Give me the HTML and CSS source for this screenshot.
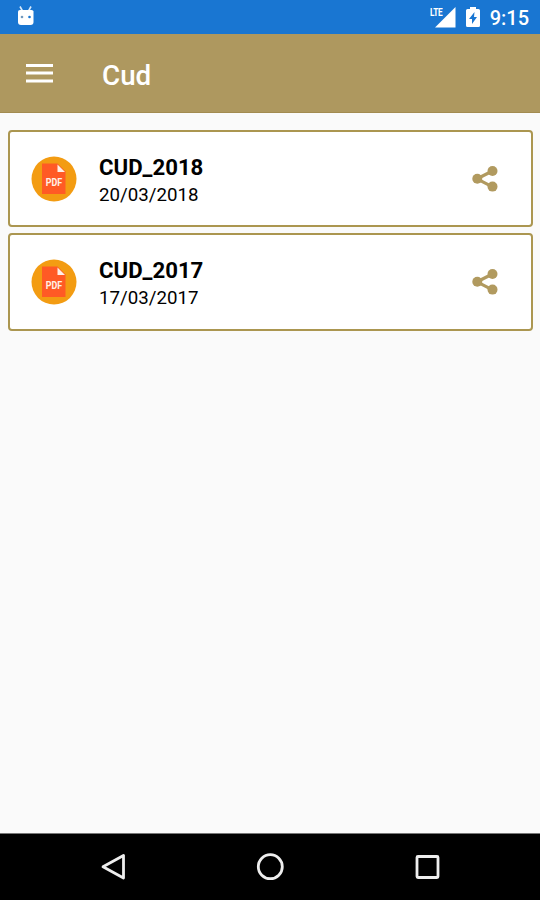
FILE: index.html
```
<!DOCTYPE html>
<html lang="en">
<head>
<meta charset="utf-8">
<title>Cud</title>
<link rel="stylesheet" href="styles.css">
</head>
<body>
<div class="statusbar">
  <svg class="robot" width="18" height="22" viewBox="0 0 18 22"><path d="M3 .5 5.500 5M14 .5 11.500 5" stroke="#d9eafb" stroke-width="1.600"/><path d="M1 5.500Q1 4 3 4h11.500Q16.500 4 16.500 5.500V16q0 3-3 3H4q-3 0-3-3z" fill="#fff"/><circle cx="5" cy="11" r="1.300" fill="#7199bd"/><circle cx="12.500" cy="11" r="1.300" fill="#1976d2"/></svg>
  <div class="network">
    <span class="lte">LTE</span>
    <svg width="22" height="22" viewBox="0 0 22 22"><path d="M21.500 1v20.500H1z" fill="#fff"/></svg>
  </div>
  <svg class="battery" width="14" height="22" viewBox="0 0 14 22"><path d="M4 1h6v2h2.500q1.500 0 1.500 1.500v15q0 1.500-1.500 1.500h-11Q0 21 0 19.500v-15Q0 3 1.500 3H4z" fill="#fff"/><path d="M8.500 6 3 13h3v5l5-7H8z" fill="#1976d2"/></svg>
  <span class="time">9:15</span>
</div>
<header class="appbar">
  <svg class="menu" width="27" height="20" viewBox="0 0 27 20"><path d="M0 2.500h27M0 10h27M0 18h27" stroke="#fff" stroke-width="3"/></svg>
  <h1 class="title">Cud</h1>
</header>
<main class="list">
  <article class="card">
    <svg class="pdf" width="46" height="46" viewBox="0 0 46 46"><circle cx="23" cy="23" r="22.500" fill="#f39c12"/><path d="M11 7.500h15.500l8 8V38H11z" fill="#ff5a25"/><path d="M26.500 8.500v7.500H34z" fill="#fff0e6"/><text class="pdf-label" x="23" y="29.500" text-anchor="middle" textLength="16.500" lengthAdjust="spacingAndGlyphs">PDF</text></svg>
    <div class="info"><div class="name">CUD_2018</div><div class="date">20/03/2018</div></div>
    <svg class="share" width="26" height="26" viewBox="0 0 26 26"><path d="M20.500 5 5 12.800l15.500 8" fill="none" stroke="#b19a5f" stroke-width="3.200"/><g fill="#b19a5f"><circle cx="20.500" cy="5" r="5"/><circle cx="5.300" cy="12.800" r="5"/><circle cx="20.500" cy="20.600" r="5"/></g></svg>
  </article>
  <article class="card">
    <svg class="pdf" width="46" height="46" viewBox="0 0 46 46"><circle cx="23" cy="23" r="22.500" fill="#f39c12"/><path d="M11 7.500h15.500l8 8V38H11z" fill="#ff5a25"/><path d="M26.500 8.500v7.500H34z" fill="#fff0e6"/><text class="pdf-label" x="23" y="29.500" text-anchor="middle" textLength="16.500" lengthAdjust="spacingAndGlyphs">PDF</text></svg>
    <div class="info"><div class="name">CUD_2017</div><div class="date">17/03/2017</div></div>
    <svg class="share" width="26" height="26" viewBox="0 0 26 26"><path d="M20.500 5 5 12.800l15.500 8" fill="none" stroke="#b19a5f" stroke-width="3.200"/><g fill="#b19a5f"><circle cx="20.500" cy="5" r="5"/><circle cx="5.300" cy="12.800" r="5"/><circle cx="20.500" cy="20.600" r="5"/></g></svg>
  </article>
</main>
<nav class="navbar">
  <svg width="30" height="30" viewBox="0 0 30 30"><path d="M25.500 3.500v22.500L5 14.800z"/></svg>
  <svg width="30" height="30" viewBox="0 0 30 30"><circle cx="15.300" cy="14.700" r="12"/></svg>
  <svg width="30" height="30" viewBox="0 0 30 30"><rect x="5" y="4.500" width="21" height="21" rx="1"/></svg>
</nav>
</body>
</html>
```
FILE: styles.css
```
* { box-sizing: border-box; }
body {
  margin: 0;
  height: 900px;
  display: flex;
  flex-direction: column;
  background: #fafafa;
  font-family: Roboto, sans-serif;
  overflow: hidden;
}
svg { display: block; flex: none; }
.statusbar {
  height: 34px;
  flex: none;
  display: flex;
  align-items: center;
  padding: 0 11px 0 17px;
  background: #1976d2;
  color: #fff;
}
.network { position: relative; margin-left: auto; margin-right: 10px; }
.lte {
  position: absolute;
  left: -4px;
  top: 1px;
  font-size: 11px;
  line-height: 11px;
  font-weight: 700;
  letter-spacing: -0.5px;
  transform: scaleX(.75);
  transform-origin: left;
}
.battery { margin-right: 10px; }
.time { font-size: 20px; font-weight: 500; line-height: 34px; padding-top: 2px; }
.appbar {
  height: 79px;
  flex: none;
  display: flex;
  align-items: center;
  padding-left: 26px;
  background: #ae985f;
  border-bottom: 1px solid #a28b50;
  color: #fff;
}
.title { margin: 5px 0 0 49px; font-size: 27.800px; font-weight: 500; line-height: 32px; }
.list {
  flex: 1;
  display: flex;
  flex-direction: column;
  gap: 6px;
  padding: 17px 7px 0 8px;
}
.card {
  height: 97px;
  display: flex;
  align-items: center;
  padding: 0 33px 0 21px;
  background: #fff;
  border: 2px solid #ab9650;
  border-radius: 4px;
}
.card + .card { height: 98px; }
.pdf-label { font-size: 11px; font-weight: 700; fill: #fff0e6; }
.info { flex: 1; margin: 4px 0 0 22px; color: #000; }
.name { font-size: 22.200px; line-height: 28px; font-weight: 700; }
.date { font-size: 18.700px; line-height: 27px; padding-top: 1px; }
.navbar {
  height: 67px;
  flex: none;
  display: flex;
  align-items: center;
  justify-content: space-between;
  padding: 0 98px;
  background: #000;
  border-top: 1px solid #777;
}
.navbar svg { fill: none; stroke: #eee; stroke-width: 2.800; stroke-linejoin: round; }
```
